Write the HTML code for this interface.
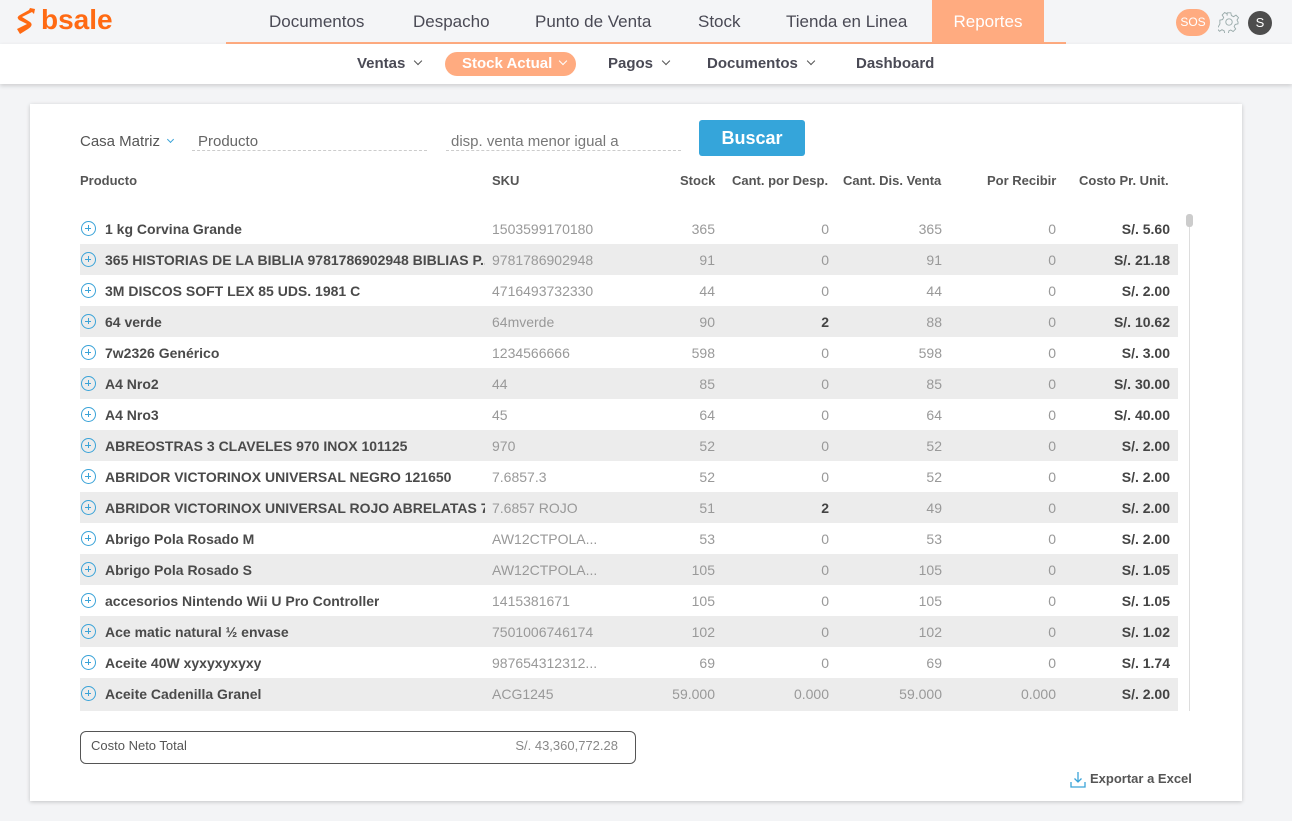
<!DOCTYPE html>
<html><head><meta charset="utf-8"><style>
*{margin:0;padding:0;box-sizing:border-box}
body{width:1292px;height:821px;background:#f3f4f6;font-family:"Liberation Sans",sans-serif;position:relative;overflow:hidden;color:#4a4a4a}
.top{position:absolute;left:0;top:0;width:1292px;height:42px;background:#f4f5f7}
.top .t{position:absolute;top:12px;font-size:17px;color:#4a4a55}
.uline{position:absolute;left:226px;top:42px;width:840px;height:2px;background:#ffab80}
.rep{position:absolute;left:932px;top:0;width:112px;height:44px;background:#ffab80;color:#fff;font-size:17px;text-align:center;line-height:44px}
.sub{position:absolute;left:0;top:44px;width:1292px;height:40px;background:#fff;box-shadow:0 2px 4px rgba(0,0,0,.15)}
.sub .s{position:absolute;top:11px;font-size:15px;font-weight:bold;color:#4a4a55}
.chev{display:inline-block;width:6px;height:6px;border-right:1.3px solid #555;border-bottom:1.3px solid #555;transform:rotate(45deg);margin-left:10px;position:relative;top:-4px}
.pill{position:absolute;left:445px;top:8px;width:131px;height:24px;border-radius:12px;background:#ffab80;color:#fff;font-size:15px;font-weight:bold;padding:3px 0 0 17px}
.card{position:absolute;left:30px;top:104px;width:1212px;height:697px;background:#fff;box-shadow:0 1px 4px rgba(0,0,0,.2)}
.a{position:absolute;white-space:nowrap}
.row{position:absolute;left:80px;width:1098px;height:31px;font-size:14px}
.row.g{background:#ececec}
.row span{position:absolute;top:8px;white-space:nowrap}
.ic{left:1px;top:8px!important;width:15px;height:15px;border:1.3px solid #3aa3d8;border-radius:50%}
.ic:before{content:"";position:absolute;left:3px;top:5.5px;width:6px;height:1.3px;background:#3aa3d8}
.ic:after{content:"";position:absolute;left:5.5px;top:3px;width:1.3px;height:6px;background:#3aa3d8}
.n{left:25px;font-weight:bold;color:#4a4a4a;max-width:380px;overflow:hidden}
.k{left:412px;color:#999}
.c1,.c2,.c3,.c4,.c5{text-align:right}
.c1{right:463px;color:#999}.c2{right:349px;color:#999}.c3{right:236px;color:#999}.c4{right:122px;color:#999}.c5{right:8px;font-weight:bold;color:#444}
.b{color:#444!important;font-weight:bold}
.h{position:absolute;top:173px;font-size:13px;font-weight:bold;color:#555}
</style></head><body>
<div class="top">
<svg style="position:absolute;left:16px;top:7px" width="20" height="28" viewBox="0 0 20 28"><path d="M14 1 L19 2 L18 7 L16 5 L6 10 L14 15 Q18 18 12 22 L4 27 L1 22 L11 17 L3 13 Q0 10 4 8 L13 3 Z" fill="#ff6a13"/></svg>
<div class="a" style="left:41px;top:4px;font-size:28px;font-weight:bold;color:#ff6a13;letter-spacing:0px">bsale</div>
<div class="t" style="left:269px">Documentos</div>
<div class="t" style="left:413px">Despacho</div>
<div class="t" style="left:535px">Punto de Venta</div>
<div class="t" style="left:698px">Stock</div>
<div class="t" style="left:786px">Tienda en Linea</div>
<div class="a" style="left:1176px;top:9px;width:34px;height:27px;border-radius:14px;background:#ffab80;color:#fff;font-size:12px;text-align:center;line-height:27px">SOS</div>
<svg style="position:absolute;left:1218px;top:11px" width="22" height="22" viewBox="0 0 24 24" fill="none" stroke="#9aa" stroke-width="1"><circle cx="12" cy="12" r="3.5"/><path d="M10 2h4l.6 3 2.4 1.2 2.6-1.7 2.8 2.8-1.7 2.6L21.9 12l-.1 2-3 .6-1.2 2.4 1.7 2.6-2.8 2.8-2.6-1.7-2 .9-.6 3h-4l-.6-3-2.4-1.2-2.6 1.7-2.8-2.8 1.7-2.6L2.1 14 2 10l3-.6 1.2-2.4-1.7-2.6 2.8-2.8 2.6 1.7L10 5z"/></svg>
<div class="a" style="left:1248px;top:11px;width:24px;height:24px;border-radius:50%;background:#4d4d4d;color:#fff;font-size:13px;text-align:center;line-height:24px">S</div>
</div>
<div class="rep">Reportes</div>
<div class="uline"></div>
<div class="sub">
<div class="s" style="left:357px">Ventas<span class="chev"></span></div>
<div class="pill">Stock Actual<span class="chev" style="border-color:#fff;margin-left:8px"></span></div>
<div class="s" style="left:608px">Pagos<span class="chev"></span></div>
<div class="s" style="left:707px">Documentos<span class="chev"></span></div>
<div class="s" style="left:856px">Dashboard</div>
</div>
<div class="card"></div>
<div class="a" style="left:80px;top:133px;font-size:15px;color:#555">Casa Matriz<span class="chev" style="border-color:#3aa3d8;width:5px;height:5px;margin-left:8px"></span></div>
<div class="a" style="left:192px;top:133px;width:235px;height:18px;border-bottom:1px dashed #ccc;font-size:15px;color:#666;padding-left:6px">Producto</div>
<div class="a" style="left:446px;top:133px;width:235px;height:18px;border-bottom:1px dashed #ccc;font-size:15px;color:#777;padding-left:5px">disp. venta menor igual a</div>
<div class="a" style="left:699px;top:120px;width:106px;height:36px;background:#35a5da;border-radius:3px;color:#fff;font-size:18px;font-weight:bold;text-align:center;line-height:37px">Buscar</div>
<div class="h" style="left:80px">Producto</div>
<div class="h" style="left:492px">SKU</div>
<div class="h" style="left:680px">Stock</div>
<div class="h" style="left:732px">Cant. por Desp.</div>
<div class="h" style="left:843px">Cant. Dis. Venta</div>
<div class="h" style="left:987px">Por Recibir</div>
<div class="h" style="left:1079px">Costo Pr. Unit.</div>
<div class="a" style="left:1189px;top:214px;width:1px;height:497px;background:#ddd"></div>
<div class="a" style="left:1186px;top:214px;width:7px;height:13px;border-radius:3px;background:#ccc"></div>

<div class="row" style="top:213px"><span class="ic"></span><span class="n">1 kg Corvina Grande</span><span class="k">1503599170180</span><span class="c1">365</span><span class="c2">0</span><span class="c3">365</span><span class="c4">0</span><span class="c5">S/. 5.60</span></div>
<div class="row g" style="top:244px"><span class="ic"></span><span class="n">365 HISTORIAS DE LA BIBLIA 9781786902948 BIBLIAS P...</span><span class="k">9781786902948</span><span class="c1">91</span><span class="c2">0</span><span class="c3">91</span><span class="c4">0</span><span class="c5">S/. 21.18</span></div>
<div class="row" style="top:275px"><span class="ic"></span><span class="n">3M DISCOS SOFT LEX 85 UDS. 1981 C</span><span class="k">4716493732330</span><span class="c1">44</span><span class="c2">0</span><span class="c3">44</span><span class="c4">0</span><span class="c5">S/. 2.00</span></div>
<div class="row g" style="top:306px"><span class="ic"></span><span class="n">64 verde</span><span class="k">64mverde</span><span class="c1">90</span><span class="c2 b">2</span><span class="c3">88</span><span class="c4">0</span><span class="c5">S/. 10.62</span></div>
<div class="row" style="top:337px"><span class="ic"></span><span class="n">7w2326 Genérico</span><span class="k">1234566666</span><span class="c1">598</span><span class="c2">0</span><span class="c3">598</span><span class="c4">0</span><span class="c5">S/. 3.00</span></div>
<div class="row g" style="top:368px"><span class="ic"></span><span class="n">A4 Nro2</span><span class="k">44</span><span class="c1">85</span><span class="c2">0</span><span class="c3">85</span><span class="c4">0</span><span class="c5">S/. 30.00</span></div>
<div class="row" style="top:399px"><span class="ic"></span><span class="n">A4 Nro3</span><span class="k">45</span><span class="c1">64</span><span class="c2">0</span><span class="c3">64</span><span class="c4">0</span><span class="c5">S/. 40.00</span></div>
<div class="row g" style="top:430px"><span class="ic"></span><span class="n">ABREOSTRAS 3 CLAVELES 970 INOX 101125</span><span class="k">970</span><span class="c1">52</span><span class="c2">0</span><span class="c3">52</span><span class="c4">0</span><span class="c5">S/. 2.00</span></div>
<div class="row" style="top:461px"><span class="ic"></span><span class="n">ABRIDOR VICTORINOX UNIVERSAL NEGRO 121650</span><span class="k">7.6857.3</span><span class="c1">52</span><span class="c2">0</span><span class="c3">52</span><span class="c4">0</span><span class="c5">S/. 2.00</span></div>
<div class="row g" style="top:492px"><span class="ic"></span><span class="n">ABRIDOR VICTORINOX UNIVERSAL ROJO ABRELATAS 7....</span><span class="k">7.6857 ROJO</span><span class="c1">51</span><span class="c2 b">2</span><span class="c3">49</span><span class="c4">0</span><span class="c5">S/. 2.00</span></div>
<div class="row" style="top:523px"><span class="ic"></span><span class="n">Abrigo Pola Rosado M</span><span class="k">AW12CTPOLA...</span><span class="c1">53</span><span class="c2">0</span><span class="c3">53</span><span class="c4">0</span><span class="c5">S/. 2.00</span></div>
<div class="row g" style="top:554px"><span class="ic"></span><span class="n">Abrigo Pola Rosado S</span><span class="k">AW12CTPOLA...</span><span class="c1">105</span><span class="c2">0</span><span class="c3">105</span><span class="c4">0</span><span class="c5">S/. 1.05</span></div>
<div class="row" style="top:585px"><span class="ic"></span><span class="n">accesorios Nintendo Wii U Pro Controller</span><span class="k">1415381671</span><span class="c1">105</span><span class="c2">0</span><span class="c3">105</span><span class="c4">0</span><span class="c5">S/. 1.05</span></div>
<div class="row g" style="top:616px"><span class="ic"></span><span class="n">Ace matic natural ½ envase</span><span class="k">7501006746174</span><span class="c1">102</span><span class="c2">0</span><span class="c3">102</span><span class="c4">0</span><span class="c5">S/. 1.02</span></div>
<div class="row" style="top:647px"><span class="ic"></span><span class="n">Aceite 40W xyxyxyxyxy</span><span class="k">987654312312...</span><span class="c1">69</span><span class="c2">0</span><span class="c3">69</span><span class="c4">0</span><span class="c5">S/. 1.74</span></div>
<div class="row g" style="top:678px;height:33px"><span class="ic"></span><span class="n">Aceite Cadenilla Granel</span><span class="k">ACG1245</span><span class="c1">59.000</span><span class="c2">0.000</span><span class="c3">59.000</span><span class="c4">0.000</span><span class="c5">S/. 2.00</span></div>

<div class="a" style="left:80px;top:731px;width:556px;height:33px;border:1px solid #555;border-radius:6px;font-size:13px">
<span class="a" style="left:10px;top:6px;color:#555">Costo Neto Total</span>
<span class="a" style="right:17px;top:6px;color:#888">S/. 43,360,772.28</span></div>
<svg style="position:absolute;left:1070px;top:771px" width="16" height="17" viewBox="0 0 16 17" fill="none" stroke="#3aa3d8" stroke-width="1.3"><path d="M8 1v10M4.5 7.5L8 11l3.5-3.5M1 11v5h14v-5"/></svg>
<div class="a" style="left:1090px;top:771px;font-size:13px;font-weight:bold;color:#555">Exportar a Excel</div>
</body></html>
